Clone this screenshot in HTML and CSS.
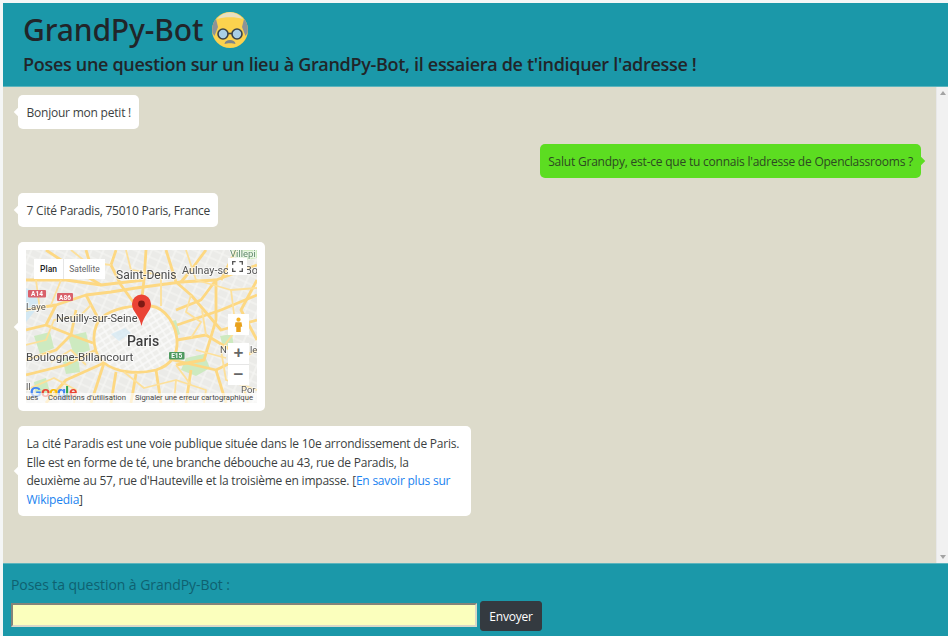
FILE: index.html
```html
<!DOCTYPE html>
<html lang="fr">
  <head>
    <title>GrandPy-Bot</title>
    <meta charset="UTF-8" />
    <link rel="stylesheet" href="styles.css">
  </head>

  <body>
    <header class="top">
      <h1 class="title">
        GrandPy-Bot
        <svg class="grandpa" viewBox="0 0 36 36" width="36" height="36">
          <circle cx="18" cy="18" r="18" fill="#fbd24e" />
          <path d="M.5 21C-.5 15 1 10 4 7L6 15 2.500 24Z" fill="#8d9398" />
          <path d="M35.500 21C36.500 15 35 10 32 7L30 15 33.500 24Z" fill="#8d9398" />
          <path d="M5 7C12 -2 24 -2 31 7 24 4.500 12 4.500 5 7Z" fill="#e9dfc0" />
          <circle cx="11" cy="22" r="5" fill="#a9cfe6" stroke="#3c4448" stroke-width="1.600" />
          <circle cx="25" cy="22" r="5" fill="#a9cfe6" stroke="#3c4448" stroke-width="1.600" />
          <path d="M16 21.500h4" stroke="#3c4448" stroke-width="1.600" />
          <path d="M12.500 32C13 29 15 28 18 28S23 29 23.500 32C21 31 15 31 12.500 32Z" fill="#7f8589" />
        </svg>
      </h1>
      <h2 class="subtitle">Poses une question sur un lieu à GrandPy-Bot, il essaiera de t'indiquer l'adresse !</h2>
    </header>

    <main class="chat">
      <div class="messages">
        <div class="bubble bot">Bonjour mon petit !</div>
        <div class="bubble me">Salut Grandpy, est-ce que tu connais l'adresse de Openclassrooms ?</div>
        <div class="bubble bot">7 Cité Paradis, 75010 Paris, France</div>

        <div class="bubble bot map-bubble">
          <div class="map">
            <svg class="map-img" viewBox="0 0 231 153" width="231" height="153">
              <defs>
                <pattern id="streets" width="11" height="8" patternUnits="userSpaceOnUse" patternTransform="rotate(24)">
                  <rect width="11" height="8" fill="#ebebe8" />
                  <path d="M0 4H11M5 0V8" stroke="#f7f7f5" stroke-width="1.200" />
                </pattern>
                <pattern id="inner" width="7" height="6" patternUnits="userSpaceOnUse" patternTransform="rotate(-32)">
                  <rect width="7" height="6" fill="#eeeeeb" />
                  <path d="M0 3H7M3 0V6" stroke="#fbfbfa" stroke-width="1.300" />
                </pattern>
              </defs>
              <rect width="231" height="153" fill="url(#streets)" />

              <!-- espaces verts -->
              <g fill="#cdeac0">
                <path d="M160 108L178 104 184 118 170 126 155 120Z" />
                <path d="M42 86L60 82 64 100 48 106Z" />
                <path d="M8 86L24 82 28 98 14 104Z" />
                <path d="M36 108L52 106 54 122 40 124Z" />
                <path d="M38 14L46 10 50 26 40 28Z" />
                <path d="M206 0H231V8L212 12Z" />
                <path d="M142 72L150 70 154 84 146 88Z" />
                <path d="M194 86L206 84 208 98 198 100Z" />
                <path d="M8 132L20 128 24 142 10 146Z" />
              </g>
              <path d="M0 38L16 44 8 62 0 72Z" fill="#d3e8f3" />

              <!-- Paris dans le périphérique -->
              <path d="M73 70C85 58 105 55 125 56 140 58 150 75 151 90 152 105 145 115 130 120 110 125 90 122 78 113 68 105 64 85 73 70Z" fill="url(#inner)" />
              <path d="M85 84l14-6 6 5-12 8Z" fill="#d3e8f3" opacity=".7" />

              <!-- grands axes -->
              <g fill="none" stroke="#fdd882" stroke-width="2.800" stroke-linejoin="round">
                <path d="M73 70C85 58 105 55 125 56 140 58 150 75 151 90 152 105 145 115 130 120 110 125 90 122 78 113 68 105 64 85 73 70Z" />
                <path d="M120 0L118 30 115 56" />
                <path d="M90 0L85 15 95 35 110 56" />
                <path d="M0 60L30 55 60 45 85 42 110 38 155 32 190 30 231 15" />
                <path d="M60 45L73 70" />
                <path d="M0 30L40 30 75 35 118 30" />
                <path d="M20 0L50 20 75 35" />
                <path d="M140 0L150 32 165 45 195 80 231 70" />
                <path d="M190 30L190 70 178 110 150 115" />
                <path d="M151 75L195 60 231 45" />
                <path d="M150 60L175 50 190 30" />
                <path d="M151 90L180 85 205 100" />
                <path d="M147 110L190 120 231 100" />
                <path d="M190 120L200 153" />
                <path d="M130 120L135 153" />
                <path d="M110 124L105 153" />
                <path d="M78 113L65 153" />
                <path d="M90 122L85 153" />
                <path d="M67 93L45 85 30 100 0 110" />
                <path d="M70 100L40 115 0 125" />
                <path d="M78 113L40 130 20 153" />
                <path d="M45 85L50 60" />
                <path d="M165 120L160 153" />
                <path d="M210 0L195 30" />
                <path d="M180 0L165 20 155 32" />
                <path d="M231 30L215 60 231 90" />
                <path d="M60 0L66 20" />
                <path d="M30 55L20 75 0 80" />
                <path d="M20 75L45 85" />
              </g>
              <g fill="none" stroke="#fde09a" stroke-width="1.800" stroke-linejoin="round">
                <path d="M100 0L105 20 135 25 135 56" />
                <path d="M160 0L170 30 205 40 231 38" />
                <path d="M205 40L210 80 195 100 200 130 231 140" />
                <path d="M165 45L160 62 175 72 165 88" />
                <path d="M0 95L20 90 28 70 55 65 65 55" />
                <path d="M0 140L28 128 50 140 48 153" />
                <path d="M60 115L45 100 25 112" />
                <path d="M98 122L118 138 150 130 180 140 178 153" />
                <path d="M170 100L200 108" />
                <path d="M85 15L60 12 45 0" />
                <path d="M10 30L14 60" />
                <path d="M35 30L25 55" />
                <path d="M150 130L148 153" />
                <path d="M180 85L176 60" />
                <path d="M210 110L222 153" />
                <path d="M150 115L165 135" />
              </g>

              <g class="shields">
                <rect x="2" y="40" width="18" height="7.500" rx="1" fill="#d9616b" />
                <text x="11" y="46" text-anchor="middle">A14</text>
                <rect x="31" y="43" width="16" height="8" rx="1" fill="#d9616b" />
                <text x="39" y="49.500" text-anchor="middle">A86</text>
                <rect x="143" y="102" width="15.500" height="7.500" rx="1" fill="#4f9a5f" />
                <text x="150.700" y="108" text-anchor="middle">E15</text>
              </g>

              <g class="labels">
                <text class="halo" x="30" y="72">Neuilly-sur-Seine</text>
                <text class="halo big" x="90" y="29">Saint-Denis</text>
                <text class="halo aulnay" x="156" y="24">Aulnay-sc</text>
                <text class="halo aulnay" x="219" y="24">Bo</text>
                <text class="halo small green" x="204" y="7">Villepi</text>
                <text class="halo small" x="0" y="60">Laye</text>
                <text class="halo boulogne" x="0" y="111">Boulogne-Billancourt</text>
                <text class="halo paris" x="101" y="96">Paris</text>
                <text class="halo small" x="194" y="103">N</text>
                <text class="halo small" x="224" y="103">le</text>
                <text class="halo small" x="215" y="143">Por</text>
                <text class="halo small" x="0" y="140">ll</text>
              </g>

              <!-- logo google sous la bande -->
              <g class="glogo">
                <text x="4" y="147" fill="#4285f4">G</text>
                <text x="15" y="147" fill="#ea4335">o</text>
                <text x="23" y="147" fill="#fbbc05">o</text>
                <text x="31" y="147" fill="#4285f4">g</text>
                <text x="39" y="147" fill="#34a853">l</text>
                <text x="43" y="147" fill="#ea4335">e</text>
              </g>

              <g class="marker">
                <path d="M115.500 76C113 64 106 62 106 54A9.500 9.500 0 0 1 125 54C125 62 118 64 115.500 76Z" fill="#ea4335" />
                <circle cx="115.500" cy="54" r="3.400" fill="#7d1a14" />
              </g>
            </svg>

            <div class="map-type">
              <span class="map-type-on">Plan</span>
              <span class="map-type-off">Satellite</span>
            </div>
            <div class="map-btn fullscreen">
              <svg viewBox="0 0 18 18" width="11" height="11">
                <path d="M1 6V1H6M12 1H17V6M17 12V17H12M6 17H1V12" fill="none" stroke="#555" stroke-width="2.400" />
              </svg>
            </div>
            <div class="map-btn pegman">
              <svg viewBox="0 0 12 20" width="9" height="17">
                <circle cx="6" cy="3.500" r="2.800" fill="#f5b324" />
                <path d="M2 7H10L11 13H9V20H3V13H1Z" fill="#e8a11c" />
              </svg>
            </div>
            <div class="map-zoom">
              <span class="zoom-key">+</span>
              <span class="zoom-key">−</span>
            </div>
            <div class="map-foot">
              <span class="foot-a">ues</span>
              <span class="foot-b">Conditions d'utilisation</span>
              <span class="foot-c">Signaler une erreur cartographique</span>
            </div>
          </div>
        </div>

        <div class="bubble bot wiki">
          La cité Paradis est une voie publique située dans le 10e arrondissement de Paris.
          Elle est en forme de té, une branche débouche au 43, rue de Paradis, la
          deuxième au 57, rue d'Hauteville et la troisième en impasse. [<a href="#">En savoir plus sur Wikipedia</a>]
        </div>
      </div>

      <div class="scrollbar">
        <span class="arrow up"></span>
        <span class="arrow down"></span>
      </div>
    </main>

    <footer class="bottom">
      <label class="ask" for="question">Poses ta question à GrandPy-Bot :</label>
      <form class="ask-row">
        <input id="question" class="ask-input" type="text" />
        <button class="send" type="button">Envoyer</button>
      </form>
    </footer>
  </body>
</html>
```

FILE: styles.css
```css
* {
  box-sizing: border-box;
}

html,
body {
  height: 100%;
}

body {
  margin: 0;
  padding: 3px 0 0 3px;
  height: 636px;
  overflow: hidden;
  display: flex;
  flex-direction: column;
  background: #f4f6f6;
  font-family: "Open Sans", "Noto Sans", Arial, sans-serif;
  color: #212529;
}

/* Header */
.top {
  height: 84px;
  padding: 8px 20px 0 20px;
  background: #1b98a9;
  border-bottom: 1px solid #5cb4bd;
}

.title {
  margin: 0;
  font-size: 30px;
  line-height: 38px;
  font-weight: 500;
  font-family: "Noto Sans", "Open Sans", sans-serif;
  letter-spacing: -0.12px;
  display: flex;
  align-items: center;
  gap: 9px;
}

.subtitle {
  margin: 2px 0 0 0;
  font-size: 18px;
  line-height: 26px;
  font-weight: 600;
  letter-spacing: -0.31px;
}

/* Chat */
.chat {
  flex: 1;
  min-height: 0;
  display: flex;
  background: #dddbcb;
}

.messages {
  flex: 1;
  padding: 8px 15px 0 15px;
  display: flex;
  flex-direction: column;
  align-items: flex-start;
  gap: 15px;
}

.bubble {
  position: relative;
  padding: 9px 8px 7px 8.500px;
  background: #ffffff;
  border-radius: 5px;
  font-size: 12px;
  line-height: 18px;
  letter-spacing: -0.22px;
  color: #3c3f42;
}

.bubble::after {
  content: "";
  position: absolute;
  top: 50%;
  width: 6px;
  height: 6px;
  margin-top: -3px;
  background: inherit;
  transform: rotate(45deg);
}

.bot::after {
  left: -3px;
}

.me {
  align-self: flex-end;
  background: #5cdd21;
  color: #2c4a22;
}

.me::after {
  right: -3px;
}

.wiki {
  width: 453px;
  line-height: 18.600px;
}

.wiki a {
  color: #1a83f0;
  text-decoration: none;
}

/* Carte */
.map-bubble {
  padding: 8px;
}

.map {
  position: relative;
  width: 231px;
  height: 153px;
  overflow: hidden;
  font-family: Roboto, Arial, sans-serif;
  letter-spacing: 0;
}

.map-img {
  display: block;
  filter: blur(0.5px);
}

.labels text {
  font-family: Roboto, Arial, sans-serif;
  font-size: 11px;
  fill: #4a4a4a;
}

.labels .halo {
  paint-order: stroke;
  stroke: rgba(255, 255, 255, 0.6);
  stroke-width: 2px;
}

.labels .big {
  font-size: 12px;
}

.labels .boulogne {
  font-size: 11.600px;
}

.labels .aulnay {
  font-size: 10.800px;
  fill: #555555;
}

.labels .small {
  font-size: 9.500px;
  fill: #5a5a5a;
}

.labels .green {
  fill: #5f8a6a;
}

.labels .paris {
  font-size: 14px;
  font-weight: 500;
  fill: #3f3f3f;
}

.shields text {
  font-family: Roboto, Arial, sans-serif;
  font-size: 6.500px;
  font-weight: 700;
  fill: #ffffff;
}

.glogo text {
  font-family: "Liberation Sans", Arial, sans-serif;
  font-size: 15px;
  font-weight: 700;
}

.map-type {
  position: absolute;
  top: 9px;
  left: 8px;
  width: 71px;
  height: 20px;
  display: flex;
  background: #ffffff;
  font-size: 8.500px;
  line-height: 20px;
  text-align: center;
}

.map-type-on {
  width: 30px;
  font-weight: 500;
  color: #222222;
  border-right: 1px solid #e6e6e6;
}

.map-type-off {
  flex: 1;
  color: #666666;
}

.map-btn {
  position: absolute;
  left: 202px;
  display: flex;
  align-items: center;
  justify-content: center;
  background: #ffffff;
}

.fullscreen {
  top: 8px;
  width: 19px;
  height: 17px;
}

.pegman {
  top: 64px;
  width: 21px;
  height: 21px;
}

.map-zoom {
  position: absolute;
  top: 93px;
  left: 202px;
  width: 21px;
  height: 42px;
  display: flex;
  flex-direction: column;
  background: #ffffff;
  font-family: "Liberation Sans", Arial, sans-serif;
}

.zoom-key {
  height: 21px;
  font-size: 17px;
  line-height: 20px;
  font-weight: 700;
  text-align: center;
  color: #666666;
}

.zoom-key + .zoom-key {
  border-top: 1px solid #e6e6e6;
}

.map-foot {
  position: absolute;
  left: 0;
  right: 0;
  bottom: 0;
  height: 10px;
  display: flex;
  background: rgba(255, 255, 255, 0.65);
  font-size: 7.700px;
  line-height: 10px;
  color: #444444;
  white-space: nowrap;
}

.foot-a {
  width: 22px;
}

.foot-b {
  width: 87px;
}

/* Scrollbar */
.scrollbar {
  width: 12px;
  display: flex;
  flex-direction: column;
  justify-content: space-between;
  align-items: center;
  padding: 4px 0;
  background: #f1f1f1;
  border-left: 1px solid #e8e8e8;
}

.arrow {
  width: 0;
  height: 0;
  border-left: 3px solid transparent;
  border-right: 3px solid transparent;
}

.up {
  border-bottom: 4px solid #a3a3a3;
}

.down {
  border-top: 4px solid #a3a3a3;
}

/* Footer */
.bottom {
  height: 73px;
  padding: 11px 8px 0 8px;
  background: #1b98a9;
  border-top: 1px solid #5cb4bd;
}

.ask {
  display: block;
  font-size: 14px;
  line-height: 20px;
  letter-spacing: -0.06px;
  color: #0f6170;
}

.ask-row {
  margin: 6px 0 0 0;
  display: flex;
  align-items: flex-start;
  gap: 3px;
}

.ask-input {
  width: 466px;
  height: 24px;
  margin-top: 2px;
  background: #fbffbd;
  border: 2px inset #d8d8c8;
}

.send {
  width: 62px;
  height: 30px;
  padding: 0;
  background: #343a40;
  border: 1px solid #343a40;
  border-radius: 3px;
  color: #ffffff;
  font-family: inherit;
  font-size: 12px;
  letter-spacing: -0.2px;
}
```
